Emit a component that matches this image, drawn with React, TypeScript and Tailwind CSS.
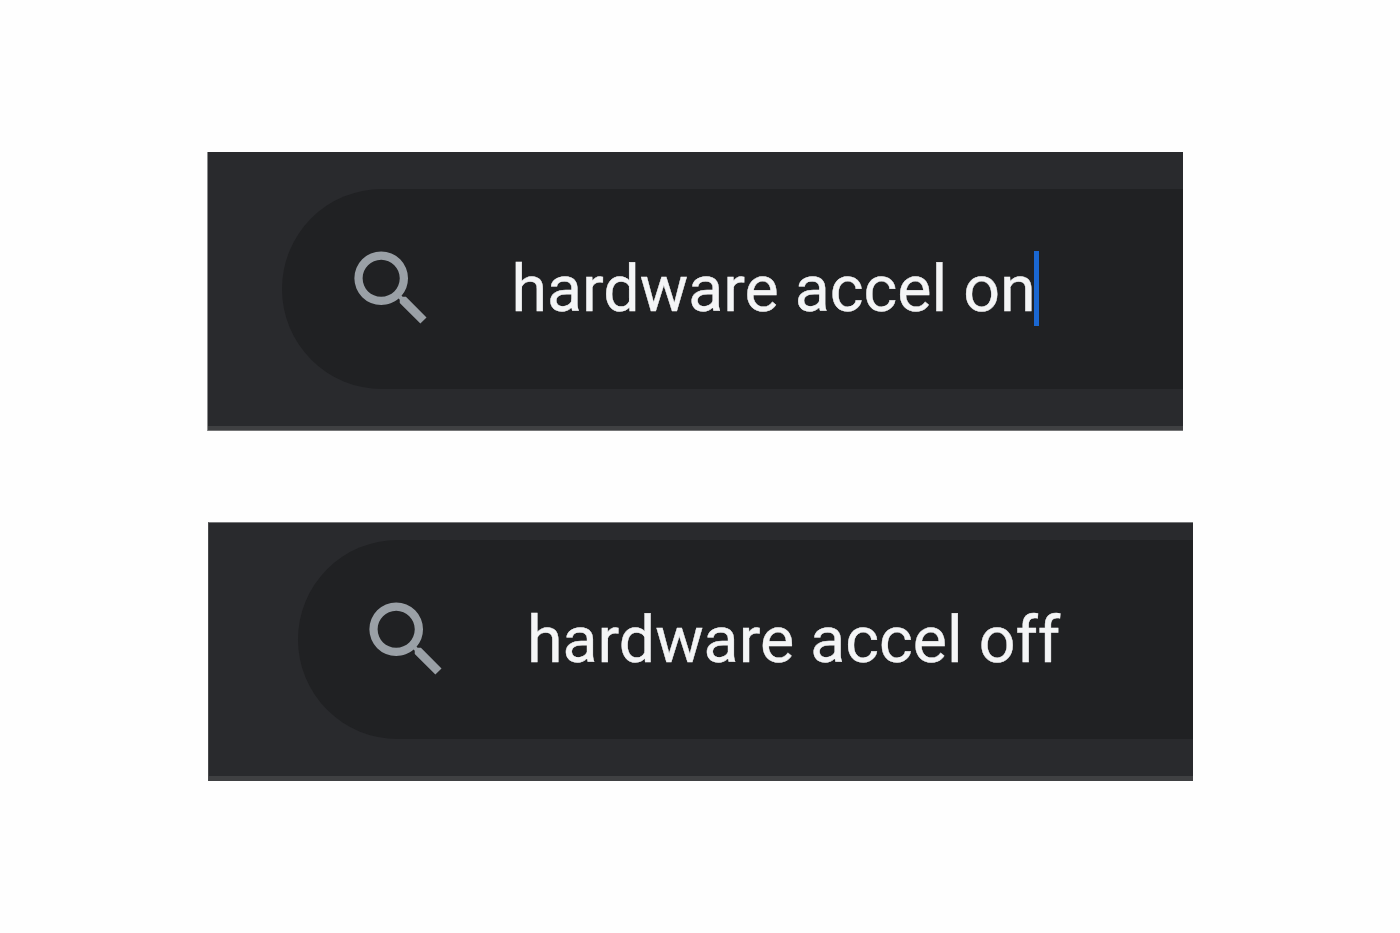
import clsx from "clsx";

function SearchIcon({ className }: { className?: string }) {
  return (
    <svg viewBox="0 0 24 24" fill="currentColor" className={clsx("shrink-0", className)} aria-hidden="true">
      <path d="M15.5 14h-.79l-.28-.27A6.471 6.471 0 0 0 16 9.5 6.5 6.5 0 1 0 9.5 16c1.61 0 3.09-.59 4.23-1.57l.27.28v.79l5 4.99L20.49 19l-4.99-5zm-6 0C7.01 14 5 11.99 5 9.5S7.01 5 9.5 5 14 7.01 14 9.5 11.99 14 9.5 14z" />
    </svg>
  );
}

type SearchBarProps = {
  query: string;
  focused?: boolean;
  className: string;
};

function SearchBar({ query, focused, className }: SearchBarProps) {
  return (
    <div className={clsx("flex flex-col bg-[#292a2d]", className)}>
      <div
        className={clsx(
          "flex items-center rounded-l-full bg-[#202123]",
          focused ? "h-[199.5px] pl-[60px]" : "h-[199px] pl-[59.4px]",
        )}
      >
        <SearchIcon className="size-[99px] text-[#9aa0a6]" />
        <span className="ml-[70.5px] whitespace-pre pt-px font-[Roboto,sans-serif] text-[64.5px] leading-none text-[#f4f5f6] [-webkit-text-stroke:0.4px_#f4f5f6]">
          {query}
        </span>
        {focused && <span className="-ml-[2px] h-[75px] w-[5px] bg-[#1a67d2]" />}
      </div>
    </div>
  );
}

export default function App() {
  return (
    <main className="flex h-[933px] w-[1400px] flex-col items-start gap-[91px] overflow-hidden bg-[#fefefe] pl-[207px] pt-[152px]">
      <SearchBar
        query="hardware accel on"
        focused
        className="h-[279px] w-[976px] border-l border-l-[#8b8c8d] pl-[74px] pt-[37px] shadow-[inset_0_-1px_#757677,inset_0_-5px_#3f4042]"
      />
      <SearchBar
        query="hardware accel off"
        className="ml-px h-[259px] w-[985px] border-l border-t border-l-[#48494b] border-t-[#77787a] pl-[89px] pt-[17px] shadow-[inset_0_-5px_#3f4042]"
      />
    </main>
  );
}
